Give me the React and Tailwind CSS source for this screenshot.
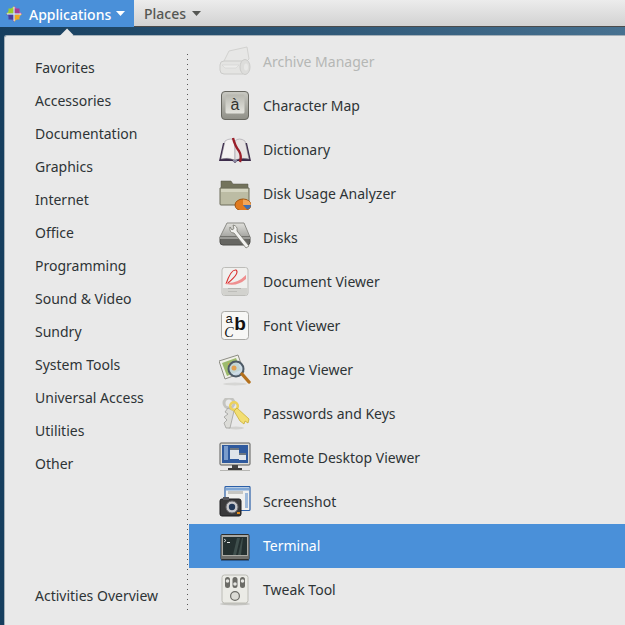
const font = { fontFamily: '"Noto Sans", "Open Sans", sans-serif' };

const Logo = () => (
  <svg width="16" height="16" viewBox="0 0 16 16">
    <path d="M8 0 L11 3 H8Z" fill="#d05cb0" />
    <path d="M8 0 L5 3 H8Z" fill="#a9d34a" />
    <path d="M16 8 L13 5 V8Z" fill="#d05cb0" />
    <path d="M16 8 L13 11 V8Z" fill="#f2b23a" />
    <path d="M8 16 L11 13 H8Z" fill="#f2b23a" />
    <path d="M8 16 L5 13 H8Z" fill="#6a5ec0" />
    <path d="M0 8 L3 11 V8Z" fill="#6a5ec0" />
    <path d="M0 8 L3 5 V8Z" fill="#a9d34a" />
    <path d="M2.5 2.5h5v5h-5z" fill="#9ccd2a" />
    <path d="M8.5 2.5h5v5h-5z" fill="#a83d92" />
    <path d="M8.5 8.5h5v5h-5z" fill="#efa720" />
    <path d="M2.5 8.5h5v5h-5z" fill="#4a3f9c" />
    <path d="M8 1v14M1 8h14" stroke="#eeeeee" strokeWidth="1" />
  </svg>
);

const Caret = ({ c }) => (
  <svg width="9" height="5" viewBox="0 0 9 5" className="block"><path d="M0 0h9L4.5 5z" fill={c} /></svg>
);

const Archive = () => (
  <svg width="32" height="32" viewBox="0 0 32 32" opacity="0.32">
    <path d="M4 17 L10 5 L28 1 L30 13 L26 17Z" fill="#e4e4e0" stroke="#a2a29c" />
    <path d="M1 19 Q1 15 5 15 H24 V28 H5 Q1 28 1 24Z" fill="#dcdcd6" stroke="#8e8e88" />
    <path d="M3 19 H20 L17 22 H6Z" fill="#f4f4f0" stroke="#a2a29c" strokeWidth="0.6" />
    <ellipse cx="26" cy="21" rx="5" ry="7.5" fill="#c4c4be" stroke="#8e8e88" />
    <ellipse cx="27" cy="21" rx="2" ry="3.5" fill="#e8e8e4" />
  </svg>
);
const CharMap = () => (
  <svg width="32" height="32" viewBox="0 0 32 32">
    <defs>
      <linearGradient id="cm1" x1="0" y1="0" x2="0" y2="1"><stop offset="0" stopColor="#c9c9c2" /><stop offset="1" stopColor="#8f8f87" /></linearGradient>
      <linearGradient id="cm2" x1="0" y1="0" x2="0" y2="1"><stop offset="0" stopColor="#b8b8b0" /><stop offset="1" stopColor="#e4e4de" /></linearGradient>
    </defs>
    <rect x="2.5" y="1.5" width="27" height="28" rx="3.5" fill="url(#cm1)" stroke="#66665f" />
    <rect x="6.5" y="4.5" width="19" height="19" rx="1.5" fill="url(#cm2)" />
    <text x="16" y="20" textAnchor="middle" fontSize="16" fill="#33332f" fontFamily="Liberation Sans">à</text>
  </svg>
);
const Dictionary = () => (
  <svg width="32" height="32" viewBox="0 0 32 32">
    <path d="M0 27 L4 9 H28 L32 27 H18.5 L16 29 L13.5 27Z" fill="#3c2b4a" />
    <path d="M2 25 L6 7 Q12 3 16 7 L16 26 Q9 23 2 25Z" fill="#f4f2f1" stroke="#8f8a95" strokeWidth="0.5" />
    <path d="M30 25 L26 7 Q20 3 16 7 L16 26 Q23 23 30 25Z" fill="#e6e3e3" stroke="#8f8a95" strokeWidth="0.5" />
    <path d="M14 4 Q16 12 20 17 Q23 22 21 28" fill="none" stroke="#9a1f2a" strokeWidth="2.4" />
    <rect x="14" y="26" width="4" height="2" fill="#8a86a0" />
  </svg>
);
const DiskUsage = () => (
  <svg width="32" height="32" viewBox="0 0 32 32">
    <path d="M2 3 H12 L14 6 H29 V12 H2Z" fill="#73735c" stroke="#55554a" strokeWidth="0.5" />
    <path d="M1 10 H30 V26 Q30 27 29 27 H2 Q1 27 1 26Z" fill="#bcbca4" stroke="#6d6d5b" />
    <rect x="2" y="11" width="27" height="3" fill="#d4d4c0" />
    <ellipse cx="24" cy="27" rx="8" ry="6" fill="#e07a1f" stroke="#9c5310" />
    <path d="M24 27 V21.5 A8 5.5 0 0 1 32 27Z" fill="#f2a65a" />
    <path d="M24 27 H32 A8 5.5 0 0 1 28 31.5Z" fill="#3d6fb4" />
  </svg>
);
const Disks = () => (
  <svg width="32" height="32" viewBox="0 0 32 32">
    <defs><linearGradient id="dk" x1="0" y1="0" x2="0" y2="1"><stop offset="0" stopColor="#e0e0dc" /><stop offset="1" stopColor="#a4a4a0" /></linearGradient></defs>
    <path d="M8 1 H25 L31 15 H1Z" fill="url(#dk)" stroke="#8b8b86" />
    <path d="M1 15 H31 V20 Q31 23 28 23 H4 Q1 23 1 20Z" fill="#666662" stroke="#4e4e4b" />
    <path d="M1 15 H31 V17 H1Z" fill="#9c9c98" />
    <path d="M11 5 Q10 11 15 11 L27 26 L30 24 L18 9 Q19 4 14 3 L15 6.5 L13 8Z" fill="#f2f2f0" stroke="#77776f" strokeWidth="0.8" />
  </svg>
);
const DocViewer = () => (
  <svg width="32" height="32" viewBox="0 0 32 32">
    <rect x="3" y="1.5" width="26" height="28" rx="2.5" fill="#f0f0ee" stroke="#bdbdb9" />
    <path d="M3.5 22 H28.5 V27 Q28.5 29 26.5 29 H5.5 Q3.5 29 3.5 27Z" fill="#d2d2ce" />
    <path d="M7 18 Q12 3 17 4 Q21 7 9 17" fill="none" stroke="#d9302f" strokeWidth="1.1" />
    <path d="M7 17 Q18 18 27 9 L27 13 Q18 21 7 18Z" fill="#ef8f8f" />
    <rect x="9" y="22" width="13" height="1" fill="#b4b4b0" />
    <rect x="9" y="25" width="9" height="1" fill="#bdbdb9" />
  </svg>
);
const FontViewer = () => (
  <svg width="32" height="32" viewBox="0 0 32 32">
    <rect x="2.5" y="1.5" width="27" height="28" rx="3" fill="#f7f7f5" stroke="#a9a9a5" />
    <text x="10" y="13" textAnchor="middle" fontSize="13" fill="#111" fontFamily="Liberation Sans">a</text>
    <text x="21" y="20" textAnchor="middle" fontSize="19" fontWeight="700" fill="#111" fontFamily="Liberation Sans">b</text>
    <text x="10" y="27" textAnchor="middle" fontSize="14" fontStyle="italic" fill="#111" fontFamily="Liberation Serif">C</text>
  </svg>
);
const ImageViewer = () => (
  <svg width="32" height="32" viewBox="0 0 32 32">
    <ellipse cx="16" cy="30" rx="12" ry="1.5" fill="#d6d6d4" />
    <path d="M0 7 L19 1 L25 18 L6 25Z" fill="#f0f0e8" stroke="#8d8d85" />
    <path d="M3 9 L17 4 L22 16 L8 22Z" fill="#9dbb6c" />
    <path d="M9 9l4 2-3 4z" fill="#d9a23e" />
    <circle cx="17" cy="15" r="7.5" fill="#c9d9e8" fillOpacity="0.85" stroke="#4d5a66" strokeWidth="2" />
    <circle cx="15" cy="14" r="2.5" fill="#e2a050" />
    <path d="M23 20 L30 28" stroke="#b4701c" strokeWidth="3.4" strokeLinecap="round" />
  </svg>
);
const Keys = () => (
  <svg width="32" height="32" viewBox="0 0 32 32">
    <ellipse cx="17" cy="30" rx="8" ry="1.5" fill="#d2d2d0" />
    <circle cx="10" cy="5" r="5" fill="none" stroke="#c4c4c0" strokeWidth="3" />
    <path d="M9 10 L6 14 L9 16 L5 19 L8 22 L5 25 L7 30 L11 30 L15 13Z" fill="#dcdcd8" stroke="#979793" strokeWidth="0.7" />
    <circle cx="15" cy="8" r="3.8" fill="none" stroke="#ecd25c" strokeWidth="2.6" />
    <path d="M18 10 L30 21 L29 25 L26 23 L25 26 L21 23 L15 13Z" fill="#f2de72" stroke="#c4a82a" strokeWidth="0.7" />
  </svg>
);
const Remote = () => (
  <svg width="32" height="32" viewBox="0 0 32 32">
    <rect x="1" y="1" width="30" height="22" rx="1" fill="#dcdcd8" stroke="#5d5d5a" />
    <rect x="3" y="3" width="26" height="18" fill="#2f5a9e" />
    <rect x="5" y="4" width="4" height="14" fill="#7a9ccc" />
    <rect x="11" y="6" width="9" height="11" fill="#dfe4ea" />
    <rect x="11" y="6" width="9" height="2" fill="#6c7680" />
    <rect x="20" y="11" width="7" height="7" fill="#dfe4ea" />
    <rect x="20" y="11" width="7" height="2" fill="#6c7680" />
    <rect x="13" y="23" width="6" height="3" fill="#444" />
    <rect x="9" y="26" width="14" height="2" fill="#3a3a3a" />
    <rect x="1" y="28" width="30" height="1" fill="#b5b5b2" />
  </svg>
);
const Screenshot = () => (
  <svg width="32" height="32" viewBox="0 0 32 32">
    <rect x="6" y="0.5" width="25" height="24" rx="1" fill="#f0f0ee" stroke="#2b5fa8" strokeWidth="1.2" />
    <rect x="7" y="1.5" width="23" height="3" fill="#7ea6d6" />
    <rect x="9" y="5" width="15" height="3" fill="#c6c6c2" />
    <rect x="26" y="7" width="3" height="15" fill="#9db9da" />
    <rect x="1" y="13" width="21" height="17" rx="2" fill="#3a3a3c" stroke="#1d1d1f" />
    <rect x="4" y="11" width="6" height="3" fill="#55555a" />
    <circle cx="13" cy="21" r="6" fill="#c8c8cc" stroke="#6a6a6e" />
    <circle cx="13" cy="21" r="3.2" fill="#23395a" />
    <rect x="18" y="26" width="3" height="2" fill="#e08a1e" />
  </svg>
);
const Terminal = () => (
  <svg width="32" height="32" viewBox="0 0 32 32">
    <rect x="2" y="29" width="28" height="2" fill="#2f5f96" />
    <rect x="2" y="4.5" width="28" height="25" rx="1" fill="#a8a8a3" stroke="#2e2e2c" />
    <rect x="4" y="7" width="24" height="18" fill="#243030" />
    <path d="M14 25 L18 8 L21 8 L17 25Z M19 25 L23 8 L24 8 L22 25Z" fill="#3f4f4d" />
    <path d="M5 9l2 1.5-2 1.5" fill="none" stroke="#e8e8e8" strokeWidth="0.8" />
    <rect x="8" y="12" width="3" height="1" fill="#e8e8e8" />
    <rect x="3" y="26" width="26" height="3" fill="#70706c" />
  </svg>
);
const Tweak = () => (
  <svg width="32" height="32" viewBox="0 0 32 32">
    <ellipse cx="16" cy="30" rx="15" ry="1.5" fill="#c4c4c0" />
    <rect x="3" y="1" width="26" height="28" rx="2.5" fill="#ebebe6" stroke="#bcbcb5" />
    <rect x="6" y="3" width="5" height="11" rx="2.5" fill="#6b6b66" />
    <rect x="13.5" y="3" width="5" height="11" rx="2.5" fill="#6b6b66" />
    <rect x="21" y="3" width="5" height="11" rx="2.5" fill="#6b6b66" />
    <circle cx="8.5" cy="7" r="1.8" fill="#e6e6e2" />
    <circle cx="16" cy="10" r="1.8" fill="#e6e6e2" />
    <circle cx="23.5" cy="7" r="1.8" fill="#e6e6e2" />
    <circle cx="16" cy="22" r="4.4" fill="#dcdcd6" stroke="#6b6b66" strokeWidth="1.2" />
  </svg>
);

const cats = ["Favorites","Accessories","Documentation","Graphics","Internet","Office","Programming","Sound & Video","Sundry","System Tools","Universal Access","Utilities","Other"];
const apps = [
  ["Archive Manager", Archive],
  ["Character Map", CharMap],
  ["Dictionary", Dictionary],
  ["Disk Usage Analyzer", DiskUsage],
  ["Disks", Disks],
  ["Document Viewer", DocViewer],
  ["Font Viewer", FontViewer],
  ["Image Viewer", ImageViewer],
  ["Passwords and Keys", Keys],
  ["Remote Desktop Viewer", Remote],
  ["Screenshot", Screenshot],
  ["Terminal", Terminal],
  ["Tweak Tool", Tweak],
];

export default function App() {
  return (
    <div style={font} className="w-[625px] h-[625px] overflow-hidden flex flex-col text-[14px] leading-none text-[#2e3436] bg-[linear-gradient(to_right,#163e5e,#477190)]">
      <div className="h-[27px] shrink-0 flex bg-[linear-gradient(to_bottom,#ececec,#d2d2d2)] border-b border-[#4b4b4b]">
        <div className="w-[134px] bg-[#4a90d9] text-white flex items-center pl-[6px] font-medium -mb-px">
          <Logo />
          <span className="ml-[7px] mt-[2px]">Applications</span>
          <span className="ml-[5px]"><Caret c="#fff" /></span>
        </div>
        <div className="flex items-center pl-[10px] text-[#555753] font-medium">
          <span className="mt-[2px]">Places</span>
          <span className="ml-[6px]"><Caret c="#555753" /></span>
        </div>
      </div>
      <div className="mt-[8px] ml-[4px] flex-1 min-h-0 relative flex bg-[#e9e9e9] rounded-tl-[3px] border-t border-l border-[#a5b0b8]">
        <div className="absolute -top-[6px] left-[55px] w-[12px] h-[12px] rotate-45 scale-x-75 bg-[#e9e9e9]"></div>
        <div className="w-[182px] shrink-0 flex flex-col pt-[15px] pb-[13px] pl-[30px]">
          {cats.map((c) => (
            <div key={c} className="h-[33px] flex items-center">{c}</div>
          ))}
          <div className="h-[33px] mt-auto flex items-center">Activities Overview</div>
        </div>
        <div className="w-px mt-[18px] mb-[14px] shrink-0 bg-[repeating-linear-gradient(to_bottom,#555555_0,#555555_1px,transparent_1px,transparent_5px)]"></div>
        <div className="flex-1 ml-px pt-[4px]">
          {apps.map(([name, Icon]) => (
            <div
              key={name}
              className={
                "h-[44px] flex items-center gap-[12px] pl-[30px] " +
                (name === "Terminal"
                  ? "bg-[#4a90d9] text-white"
                  : name === "Archive Manager"
                  ? "text-[#b5b7b5]"
                  : "")
              }
            >
              <Icon />
              <span>{name}</span>
            </div>
          ))}
        </div>
      </div>
    </div>
  );
}
